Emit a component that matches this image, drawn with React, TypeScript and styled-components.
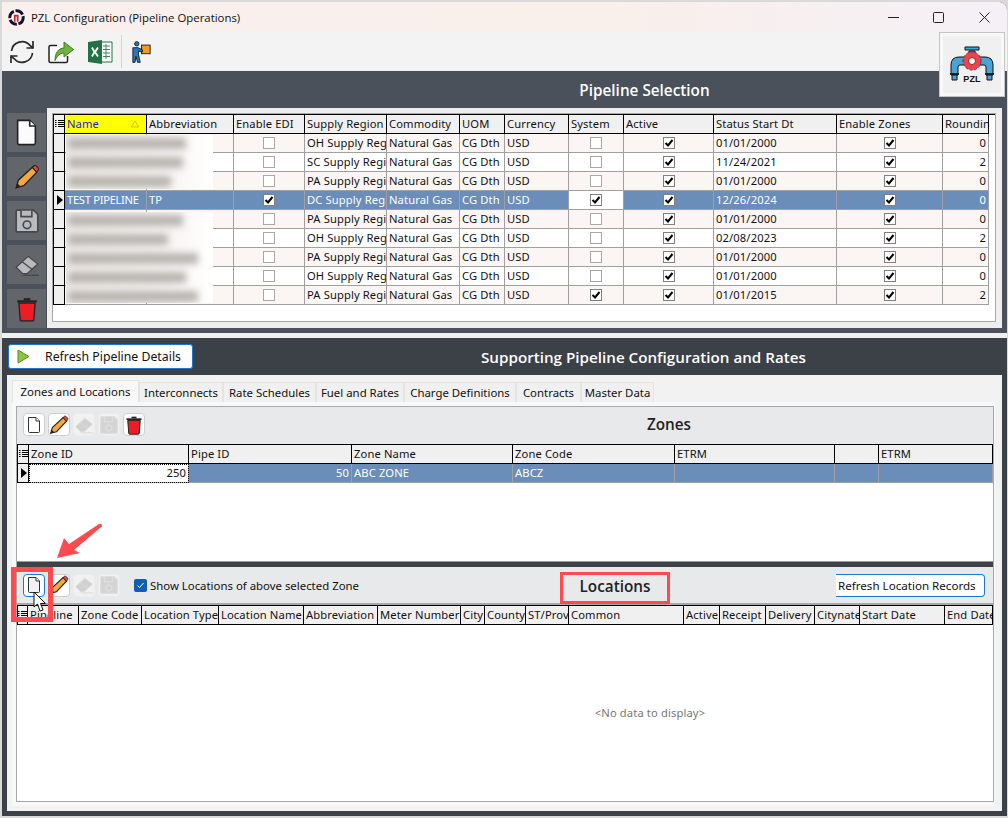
import styled, { createGlobalStyle } from "styled-components";

const GlobalStyle = createGlobalStyle`
  html, body {
    margin: 0;
    padding: 0;
    background: #d9d9d9;
  }
  * {
    box-sizing: border-box;
  }
`;

const gridFont = `"Noto Sans", "DejaVu Sans", sans-serif`;
const titleFont = `"Open Sans", "Noto Sans", sans-serif`;

const Window = styled.div`
  position: relative;
  width: 1005px;
  height: 814px;
  margin: 2px 0 0 2px;
  font-family: ${gridFont};
  font-size: 11.2px;
  letter-spacing: 0.12px;
  color: #111;
  background: #4a515a;
  overflow: hidden;
  border-top-right-radius: 8px;
`;

const TitleBar = styled.div`
  height: 30px;
  display: flex;
  align-items: center;
  padding-left: 6px;
  background: linear-gradient(90deg, #f9f0ee 0%, #f9efeb 60%, #f5f0f6 100%);
  font-family: ${titleFont};
  font-size: 11.4px;
  letter-spacing: 0;
`;

const TitleText = styled.span`
  margin-left: 6px;
  flex: 1;
`;

const WinButton = styled.div`
  width: 45.5px;
  height: 30px;
  display: flex;
  align-items: center;
  justify-content: center;
`;

const ToolBar = styled.div`
  height: 39px;
  display: flex;
  align-items: center;
  padding-left: 7px;
  background: #f3f3f3;
  gap: 13px;
`;

const ToolSep = styled.div`
  width: 1px;
  height: 33px;
  margin: 0 -3px 0 -5px;
  background: #d4d4d4;
`;

const TopSection = styled.div`
  height: 262px;
  display: flex;
  padding-left: 5px;
  background: #4a515a;
`;

const Rail = styled.div`
  width: 39px;
  margin: 42px 1px 0 0;
  display: flex;
  flex-direction: column;
  gap: 5px;
`;

const RailButton = styled.div`
  width: 39px;
  height: 39px;
  display: flex;
  align-items: center;
  justify-content: center;
  background: #62656a;
`;

const TopColumn = styled.div`
  width: 955px;
  display: flex;
  flex-direction: column;
`;

const SectionHeading = styled.div`
  height: 37px;
  padding-left: 240px;
  display: flex;
  align-items: center;
  justify-content: center;
  font-family: ${titleFont};
  font-size: 15.3px;
  font-weight: 600;
  letter-spacing: 0;
  color: #fff;
`;

const TopPanel = styled.div`
  height: 220px;
  padding: 5px 6px 6px 5px;
  background: #eeeeee;
`;

const WhiteBox = styled.div`
  height: 100%;
  border: 1px solid #a8a8a8;
  background: #fff;
`;

const Divider = styled.div`
  height: 5px;
  background: #f0f0f0;
`;

const LowerSection = styled.div`
  height: 478px;
  padding: 0 5px;
  background: #3c4047;
`;

const LowerHeader = styled.div`
  height: 37px;
  display: flex;
  align-items: center;
`;

const RefreshDetails = styled.div`
  width: 185px;
  height: 25px;
  margin-left: 1px;
  display: flex;
  align-items: center;
  background: #fff;
  border: 1px solid #1a78d0;
  border-radius: 3px;
  font-size: 12.3px;
  letter-spacing: 0;
  padding-left: 8px;
  gap: 15px;
`;

const LowerHeading = styled.div`
  margin-left: 288px;
  font-family: ${titleFont};
  font-size: 15.2px;
  font-weight: 600;
  letter-spacing: 0;
  color: #fff;
`;

const LowerPanel = styled.div`
  width: 995px;
  height: 436px;
  padding: 5px 0 0 5px;
  background: #f2f2f2;
`;

const TabRow = styled.div`
  height: 22px;
  display: flex;
  align-items: flex-end;
`;

const Tab = styled.div<{ $w: number; $active?: boolean }>`
  width: ${(p) => p.$w}px;
  height: ${(p) => (p.$active ? 22 : 20)}px;
  display: flex;
  align-items: center;
  justify-content: center;
  white-space: nowrap;
  font-size: 11.4px;
  letter-spacing: 0;
  background: ${(p) => (p.$active ? "#f8f8f8" : "#f0f0f0")};
  border: 1px solid #e4e4e4;
  border-bottom: none;
`;

const TabPage = styled.div`
  width: 983px;
  height: 404px;
  padding: 4px 1px 0 4px;
  background: #f8f8f8;
`;

const Frame = styled.div`
  width: 978px;
  height: 396px;
  display: flex;
  flex-direction: column;
  border: 1px solid #a8a8a8;
  background: #fff;
`;

const PaneBar = styled.div<{ $h: number; $under?: number }>`
  height: ${(p) => p.$h}px;
  flex: none;
  display: flex;
  align-items: center;
  padding: 0 0 ${(p) => p.$under ?? 0}px 6px;
  gap: 3px;
  background: #e8e9eb;
`;

const SmallButton = styled.div<{ $off?: boolean; $focus?: boolean }>`
  width: 22px;
  height: 23px;
  display: flex;
  align-items: center;
  justify-content: center;
  background: ${(p) => (p.$off ? "#f1f1f1" : "#fff")};
  border: 1px solid ${(p) => (p.$focus ? "#1a78d0" : p.$off ? "#ececec" : "#cfcfcf")};
  border-radius: 4px;
`;

const PaneTitle = styled.div<{ $left: number; $w: number; $drop: number }>`
  width: ${(p) => p.$w}px;
  margin: ${(p) => Math.max(p.$drop, 0)}px 0 ${(p) => Math.max(-p.$drop, 0)}px ${(p) => p.$left}px;
  text-align: center;
  font-family: ${titleFont};
  font-size: 15.3px;
  font-weight: 600;
  letter-spacing: 0;
  color: #222;
`;

const ShowLabel = styled.label`
  display: flex;
  align-items: center;
  gap: 3px;
  margin-left: 11px;
  width: 225px;
  white-space: nowrap;
  font-size: 11.4px;
  letter-spacing: 0;
`;

const BlueCheck = styled.span`
  width: 13px;
  height: 13px;
  display: flex;
  align-items: center;
  justify-content: center;
  border-radius: 2px;
  background: #0f5fb5;
`;

const RefreshRecords = styled.div`
  width: 149px;
  height: 23px;
  margin-left: 163px;
  display: flex;
  align-items: center;
  padding-left: 2px;
  white-space: nowrap;
  font-size: 11.6px;
  letter-spacing: 0;
  background: #fff;
  border: 1px solid #1a78d0;
  border-left: none;
  border-radius: 0 4px 4px 0;
`;

const Splitter = styled.div`
  height: 6px;
  flex: none;
  background: #3f4349;
  border-top: 1px solid #9a9a9a;
`;

const BarRule = styled.div`
  height: 2px;
  flex: none;
  background: #a8a8a8;
`;

const GridPane = styled.div<{ $h: number }>`
  height: ${(p) => p.$h}px;
  flex: none;
  position: relative;
  background: #fff;
`;

const GridRow = styled.div<{ $cols: string }>`
  display: grid;
  grid-template-columns: ${(p) => p.$cols};
  height: 19px;
`;

const HeaderRow = styled(GridRow)`
  height: 20px;
  border-top: 1px solid #000;
`;

const HeadCell = styled.div<{ $hot?: boolean }>`
  display: flex;
  align-items: center;
  justify-content: space-between;
  padding: 0 2px 1px;
  overflow: hidden;
  white-space: nowrap;
  background: ${(p) => (p.$hot ? "#ffff00" : "#f0f0f0")};
  color: ${(p) => (p.$hot ? "#1a1ae0" : "#111")};
  border-right: 1px solid #000;
  border-bottom: 1px solid #000;
`;

const SortMark = styled.svg`
  margin-right: 5px;
`;

const Corner = styled.div`
  display: flex;
  align-items: center;
  justify-content: center;
  background: #f0f0f0;
  border-left: 1px solid #000;
  border-right: 1px solid #000;
  border-bottom: 1px solid #000;
`;

const Marker = styled(Corner)`
  padding-left: 1px;
`;

const Cell = styled.div<{
  $bg: string;
  $light?: boolean;
  $right?: boolean;
  $center?: boolean;
  $dotted?: boolean;
  $tight?: boolean;
}>`
  display: flex;
  align-items: center;
  justify-content: ${(p) => (p.$right ? "flex-end" : p.$center ? "center" : "flex-start")};
  padding: 0 2px 1px;
  overflow: hidden;
  white-space: nowrap;
  background: ${(p) => p.$bg};
  color: ${(p) => (p.$light ? "#fff" : "#111")};
  border-right: 1px solid #a0a0a0;
  border-bottom: 1px solid #a0a0a0;
  ${(p) => (p.$tight ? "letter-spacing: -0.3px;" : "")}
  ${(p) => (p.$dotted ? "outline: 1px dotted #000; outline-offset: -1px;" : "")}
`;

const Box = styled.span<{ $on?: boolean }>`
  width: 12px;
  height: 12px;
  display: flex;
  align-items: center;
  justify-content: center;
  background: #fff;
  border: 1px solid ${(p) => (p.$on ? "#808080" : "#a8a8a8")};
`;

const BlurPatch = styled.div<{ $top: number; $h: number }>`
  position: absolute;
  left: 13px;
  top: ${(p) => p.$top}px;
  width: 147px;
  height: ${(p) => p.$h}px;
  display: flex;
  flex-direction: column;
  padding: 3px 0 0 2px;
  gap: 8px;
  overflow: hidden;
  background: linear-gradient(90deg, #f1edea 0%, #f8f5f3 70%, #fff 100%);
`;

const BlurBar = styled.div<{ $w: number }>`
  width: ${(p) => p.$w}px;
  height: 11px;
  flex: none;
  background: #b8b3af;
  filter: blur(3.5px);
`;

const Empty = styled.div`
  height: 175px;
  display: flex;
  align-items: center;
  justify-content: center;
  padding-left: 290px;
  color: #777;
`;

const LogoCard = styled.div`
  position: absolute;
  left: 937px;
  top: 30px;
  width: 66px;
  height: 65px;
  display: flex;
  align-items: center;
  justify-content: center;
  background: #f0f0f0;
  border: 1px solid #c4c4c4;
  outline: 3px solid #f8f8f8;
  outline-offset: -4px;
`;

const RedBox = styled.div<{ $x: number; $y: number; $w: number; $h: number; $t: number }>`
  position: absolute;
  left: ${(p) => p.$x}px;
  top: ${(p) => p.$y}px;
  width: ${(p) => p.$w}px;
  height: ${(p) => p.$h}px;
  border: ${(p) => p.$t}px solid #ff4b4f;
`;

const Overlay = styled.svg`
  position: absolute;
  overflow: visible;
`;

const ArrowMark = styled(Overlay)`
  left: 53px;
  top: 519px;
`;

const CursorMark = styled(Overlay)`
  left: 30px;
  top: 589px;
`;

const RefreshIcon = () => (
  <svg width="26" height="26" viewBox="0 0 26 26" fill="none" stroke="#2a2a2a" strokeWidth="1.7">
    <path d="M2.5 12 A10.5 10.5 0 0 1 21 6.5 L24 9" />
    <path d="M24 2 V9 H17.5" />
    <path d="M23.5 14 A10.5 10.5 0 0 1 5 19.5 L2 17" />
    <path d="M2 24 V17 H8.5" />
  </svg>
);

const ShareIcon = () => (
  <svg width="26" height="26" viewBox="0 0 26 26">
    <path d="M9 6.500 H2.500 Q1 6.500 1 8 V22 Q1 23.500 2.500 23.500 H18 Q19.500 23.500 19.500 22 V17" fill="#fff" stroke="#222" strokeWidth="1.500" />
    <path d="M7 21.500 C7 14 10 9.500 16 9 V3 L25.500 10.500 L16 18 V14 C12 14 9 17 7 21.500 Z" fill="#6fb33c" stroke="#3e7e1e" />
  </svg>
);

const ExcelIcon = () => (
  <svg width="26" height="26" viewBox="0 0 26 26">
    <path d="M10 3 H25 V23 H10 Z" fill="#fff" stroke="#217346" />
    <path d="M16 7 H23 M16 10.500 H23 M16 14 H23 M16 17.500 H23 M19 5 V20" stroke="#3a8a5c" strokeWidth="1" />
    <path d="M1 3 L15 1 V25 L1 23 Z" fill="#217346" />
    <path d="M5 8.500 L7.500 13 L5 17.500 M11 8.500 L8 13 L11 17.500" stroke="#fff" strokeWidth="1.800" fill="none" />
  </svg>
);

const CarrierIcon = () => (
  <svg width="19" height="24" viewBox="0 0 22 26">
    <rect x="11" y="5" width="10" height="10" fill="#f39a1f" stroke="#111" />
    <circle cx="5.500" cy="3.500" r="2.500" fill="#2479bd" stroke="#111" />
    <path d="M2 8 H7 L12 10.500 V13 L7.500 12 V16 L9.500 25 H6.500 L4.500 18 L3.500 25 H1 V8 Z" fill="#2479bd" stroke="#111" />
  </svg>
);

const DocIcon = ({ size = 18, fill = "#fff", line = "#333" }: { size?: number; fill?: string; line?: string }) => (
  <svg width={size} height={size} viewBox="0 0 18 18" fill={fill} stroke={line} strokeWidth="1">
    <path d="M3.500 1.500 H11 L14.500 5 V15.500 Q14.500 16.500 13.500 16.500 H4.500 Q3.500 16.500 3.500 15.500 Z" />
    <path d="M11 1.500 V5 H14.500" />
  </svg>
);

const PencilIcon = ({ size = 20 }: { size?: number }) => (
  <svg width={size} height={size} viewBox="0 0 24 24">
    <path d="M2 22 L4 15 L17 3 L21 7.500 L9 20 Z" fill="#f6a93b" stroke="#222" strokeWidth="1.300" />
    <path d="M17 3 L18.500 1.600 Q19.500 1 20.500 1.800 L22.300 3.700 Q23 4.800 22.200 5.800 L21 7.500 Z" fill="#ef4452" stroke="#222" strokeWidth="1" />
    <path d="M2 22 L3.200 17.800 L6.200 20.800 Z" fill="#222" />
  </svg>
);

const SaveIcon = ({ size = 20, fill = "#d4d4d4", line = "#dedede" }: { size?: number; fill?: string; line?: string }) => (
  <svg width={size} height={size} viewBox="0 0 24 24" fill={fill} stroke={line} strokeWidth="1.500">
    <path d="M2 3 Q2 2 3 2 H18 L22 6 V21 Q22 22 21 22 H3 Q2 22 2 21 Z" />
    <path d="M6.500 2.500 V8 H16.500 V2.500" />
    <circle cx="12" cy="15.500" r="3.500" />
  </svg>
);

const EraserIcon = ({ size = 20, fill = "#d0d0d0", line = "#dadada" }: { size?: number; fill?: string; line?: string }) => (
  <svg width={size} height={size} viewBox="0 0 24 24" fill={fill} stroke={line} strokeWidth="1.200">
    <path d="M2 14 L13 4 L22 11 L12 20 H8 Z" />
    <path d="M7.500 9 L16.500 16" fill="none" />
    <path d="M8 21.500 H23" fill="none" />
  </svg>
);

const TrashIcon = ({ size = 20 }: { size?: number }) => (
  <svg width={size} height={size} viewBox="0 0 24 24">
    <path d="M9 2 H15 V4 H9 Z" fill="#222" />
    <path d="M3 4 H21 V6 H3 Z" fill="#222" />
    <path d="M4.500 6.500 H19.500 L18.300 22 Q18.200 23 17.300 23 H6.700 Q5.800 23 5.700 22 Z" fill="#ee1c25" stroke="#222" strokeWidth="1.200" />
  </svg>
);

const ListGlyph = () => (
  <svg width="9" height="10" viewBox="0 0 9 10" stroke="#000" strokeWidth="1">
    <path d="M0 1.500 H1.500 M3 1.500 H9 M0 3.500 H1.500 M3 3.500 H9 M0 5.500 H1.500 M3 5.500 H9 M0 7.500 H1.500 M3 7.500 H9" />
  </svg>
);

const RowArrow = () => (
  <svg width="6" height="10" viewBox="0 0 6 10">
    <path d="M0 0 L6 5 L0 10 Z" fill="#000" />
  </svg>
);

const CheckMark = () => (
  <svg width="10" height="10" viewBox="0 0 10 10" fill="none" stroke="#000" strokeWidth="2">
    <path d="M1.500 5 L4 7.500 L8.500 2" />
  </svg>
);

const PipeLogo = () => (
  <svg width="46" height="40" viewBox="0 0 46 40">
    <path d="M20 6 H26 V12 H20 Z M16 2 H30 V5 H16 Z" fill="#4aa3d8" stroke="#111" />
    <path d="M2 30 V20 Q2 12 10 12 H16 V20 H11 Q9 20 9 22 V30 Z" fill="#4aa3d8" stroke="#111" />
    <path d="M44 30 V20 Q44 12 36 12 H30 V20 H35 Q37 20 37 22 V30 Z" fill="#4aa3d8" stroke="#111" />
    <path d="M1 28 H10 V30 H1 Z M36 28 H45 V30 H36 Z" fill="#222" />
    <path d="M3 30 H8 V35 H3 Z M38 30 H43 V35 H38 Z" fill="#4aa3d8" stroke="#111" />
    <circle cx="23" cy="16" r="9" fill="#e8454f" stroke="#a01e28" strokeDasharray="3 1.500" />
    <circle cx="23" cy="16" r="3.500" fill="#fff" stroke="#a01e28" />
    <text x="23" y="36.500" textAnchor="middle" fontFamily="Liberation Sans, sans-serif" fontSize="9" fontWeight="700" fill="#111">
      PZL
    </text>
  </svg>
);

const AppLogo = () => (
  <svg width="17" height="17" viewBox="0 0 16 16">
    <circle cx="8" cy="8" r="6.300" fill="#fff" stroke="#141428" strokeWidth="2.800" strokeDasharray="8 1.500" />
    <path d="M5.500 12 V5.500 H10 V12 H8.300 V7 H7.200 V12 Z" fill="#d8212c" />
  </svg>
);

const topCols = "12px 82px 87px 71px 82px 73px 45px 64px 55px 90px 123px 106px 46px";
const zoneCols = "12px 160px 163px 161px 162px 160px 44px 114px";
const locCols = "11px 51px 63px 77px 85px 74px 83px 24px 41px 43px 115px 36px 46px 49px 45px 85px 48px";

const topHeads = [
  "Abbreviation",
  "Enable EDI",
  "Supply Region",
  "Commodity",
  "UOM",
  "Currency",
  "System",
  "Active",
  "Status Start Dt",
  "Enable Zones",
  "Rounding",
];

const pipelines = [
  { region: "OH Supply Region", date: "01/01/2000", round: 0 },
  { region: "SC Supply Region", date: "11/24/2021", round: 2 },
  { region: "PA Supply Region", date: "01/01/2000", round: 0 },
  { region: "DC Supply Region", date: "12/26/2024", round: 0, name: "TEST PIPELINE", abbr: "TP", edi: true, system: true },
  { region: "PA Supply Region", date: "01/01/2000", round: 0 },
  { region: "OH Supply Region", date: "02/08/2023", round: 2 },
  { region: "PA Supply Region", date: "01/01/2000", round: 0 },
  { region: "OH Supply Region", date: "01/01/2000", round: 0 },
  { region: "PA Supply Region", date: "01/01/2015", round: 2, system: true },
];

const locHeads = [
  "Pipeline",
  "Zone Code",
  "Location Type",
  "Location Name",
  "Abbreviation",
  "Meter Number",
  "City",
  "County",
  "ST/Prov",
  "Common",
  "Active",
  "Receipt",
  "Delivery",
  "Citynate",
  "Start Date",
  "End Date",
];

const tabs = [
  { label: "Interconnects", w: 84 },
  { label: "Rate Schedules", w: 93 },
  { label: "Fuel and Rates", w: 88 },
  { label: "Charge Definitions", w: 112 },
  { label: "Contracts", w: 65 },
  { label: "Master Data", w: 73 },
];

const BLUE = "#6a8db9";

function CheckCell({ on, bg }: { on?: boolean; bg: string }) {
  return (
    <Cell $bg={bg} $center>
      <Box $on={on}>{on && <CheckMark />}</Box>
    </Cell>
  );
}

function PipelineRow({ row, index }: { row: (typeof pipelines)[number]; index: number }) {
  const selected = row.name !== undefined;
  const bg = selected ? BLUE : index % 2 === 0 ? "#fbf6f3" : "#fff";
  return (
    <GridRow $cols={topCols}>
      <Marker>{selected && <RowArrow />}</Marker>
      <Cell $bg={bg} $light={selected} $tight>{row.name}</Cell>
      <Cell $bg={bg} $light={selected}>{row.abbr}</Cell>
      <CheckCell bg={bg} on={row.edi} />
      <Cell $bg={bg} $light={selected}>{row.region}</Cell>
      <Cell $bg={bg} $light={selected}>Natural Gas</Cell>
      <Cell $bg={bg} $light={selected}>CG Dth</Cell>
      <Cell $bg={bg} $light={selected}>USD</Cell>
      <CheckCell bg={selected ? "#fff" : bg} on={row.system} />
      <CheckCell bg={bg} on />
      <Cell $bg={bg} $light={selected}>{row.date}</Cell>
      <CheckCell bg={bg} on />
      <Cell $bg={bg} $light={selected} $right>{row.round}</Cell>
    </GridRow>
  );
}

export default function App() {
  return (
    <>
      <GlobalStyle />
      <Window>
        <TitleBar>
          <AppLogo />
          <TitleText>PZL Configuration (Pipeline Operations)</TitleText>
          <WinButton>
            <svg width="11" height="11" viewBox="0 0 11 11" stroke="#222" fill="none">
              <path d="M0 5.500 H11" />
            </svg>
          </WinButton>
          <WinButton>
            <svg width="11" height="11" viewBox="0 0 11 11" stroke="#222" fill="none">
              <rect x="0.500" y="0.500" width="10" height="10" rx="1" />
            </svg>
          </WinButton>
          <WinButton>
            <svg width="11" height="11" viewBox="0 0 11 11" stroke="#222" fill="none">
              <path d="M0.500 0.500 L10.500 10.500 M10.500 0.500 L0.500 10.500" />
            </svg>
          </WinButton>
        </TitleBar>

        <ToolBar>
          <RefreshIcon />
          <ShareIcon />
          <ExcelIcon />
          <ToolSep />
          <CarrierIcon />
        </ToolBar>

        <TopSection>
          <Rail>
            <RailButton>
              <DocIcon size={29} fill="#fbfbfb" line="#222" />
            </RailButton>
            <RailButton>
              <PencilIcon size={26} />
            </RailButton>
            <RailButton>
              <SaveIcon size={26} fill="#b9babc" line="#45474b" />
            </RailButton>
            <RailButton>
              <EraserIcon size={26} fill="#b9babc" line="#45474b" />
            </RailButton>
            <RailButton>
              <TrashIcon size={26} />
            </RailButton>
          </Rail>
          <TopColumn>
            <SectionHeading>Pipeline Selection</SectionHeading>
            <TopPanel>
              <WhiteBox>
                <GridPane $h={190}>
                  <HeaderRow $cols={topCols}>
                    <Corner>
                      <ListGlyph />
                    </Corner>
                    <HeadCell $hot>
                      Name
                      <SortMark width="8" height="8" viewBox="0 0 8 8" fill="none" stroke="#c9c34a">
                        <path d="M4 1 L7.500 7 H0.500 Z" />
                      </SortMark>
                    </HeadCell>
                    {topHeads.map((h) => (
                      <HeadCell key={h}>{h}</HeadCell>
                    ))}
                  </HeaderRow>
                  {pipelines.map((row, i) => (
                    <PipelineRow key={i} row={row} index={i} />
                  ))}
                  <BlurPatch $top={21} $h={54}>
                    {[118, 115, 103].map((w, i) => (
                      <BlurBar key={i} $w={w} />
                    ))}
                  </BlurPatch>
                  <BlurPatch $top={98} $h={91}>
                    {[115, 100, 130, 118, 130].map((w, i) => (
                      <BlurBar key={i} $w={w} />
                    ))}
                  </BlurPatch>
                </GridPane>
              </WhiteBox>
            </TopPanel>
          </TopColumn>
        </TopSection>

        <Divider />

        <LowerSection>
          <LowerHeader>
            <RefreshDetails>
              <svg width="13" height="15" viewBox="0 0 13 15">
                <path d="M1 1 L12 7.500 L1 14 Z" fill="#8cc63f" stroke="#5a8a2a" />
              </svg>
              Refresh Pipeline Details
            </RefreshDetails>
            <LowerHeading>Supporting Pipeline Configuration and Rates</LowerHeading>
          </LowerHeader>
          <LowerPanel>
            <TabRow>
              <Tab $w={127} $active>Zones and Locations</Tab>
              {tabs.map((t) => (
                <Tab key={t.label} $w={t.w}>{t.label}</Tab>
              ))}
            </TabRow>
            <TabPage>
              <Frame>
                <PaneBar $h={37} $under={2}>
                  <SmallButton>
                    <DocIcon />
                  </SmallButton>
                  <SmallButton>
                    <PencilIcon />
                  </SmallButton>
                  <SmallButton $off>
                    <EraserIcon />
                  </SmallButton>
                  <SmallButton $off>
                    <SaveIcon />
                  </SmallButton>
                  <SmallButton>
                    <TrashIcon />
                  </SmallButton>
                  <PaneTitle $left={426} $w={190} $drop={-2}>Zones</PaneTitle>
                </PaneBar>
                <GridPane $h={117}>
                  <HeaderRow $cols={zoneCols}>
                    <Corner>
                      <ListGlyph />
                    </Corner>
                    <HeadCell>Zone ID</HeadCell>
                    <HeadCell>Pipe ID</HeadCell>
                    <HeadCell>Zone Name</HeadCell>
                    <HeadCell>Zone Code</HeadCell>
                    <HeadCell>ETRM</HeadCell>
                    <HeadCell />
                    <HeadCell>ETRM</HeadCell>
                  </HeaderRow>
                  <GridRow $cols={zoneCols}>
                    <Marker>
                      <RowArrow />
                    </Marker>
                    <Cell $bg="#fff" $right $dotted>250</Cell>
                    <Cell $bg={BLUE} $light $right>50</Cell>
                    <Cell $bg={BLUE} $light>ABC ZONE</Cell>
                    <Cell $bg={BLUE} $light>ABCZ</Cell>
                    <Cell $bg={BLUE} />
                    <Cell $bg={BLUE} />
                    <Cell $bg={BLUE} />
                  </GridRow>
                </GridPane>
                <Splitter />
                <PaneBar $h={36}>
                  <SmallButton $focus>
                    <DocIcon fill="#f2f2f2" />
                  </SmallButton>
                  <SmallButton>
                    <PencilIcon />
                  </SmallButton>
                  <SmallButton $off>
                    <EraserIcon />
                  </SmallButton>
                  <SmallButton $off>
                    <SaveIcon />
                  </SmallButton>
                  <ShowLabel>
                    <BlueCheck>
                      <svg width="9" height="9" viewBox="0 0 9 9" fill="none" stroke="#fff" strokeWidth="1">
                        <path d="M1.500 4.500 L3.500 6.500 L7.500 2" />
                      </svg>
                    </BlueCheck>
                    Show Locations of above selected Zone
                  </ShowLabel>
                  <PaneTitle $left={198} $w={110} $drop={2}>Locations</PaneTitle>
                  <RefreshRecords>Refresh Location Records</RefreshRecords>
                </PaneBar>
                <BarRule />
                <GridPane $h={196}>
                  <HeaderRow $cols={locCols}>
                    <Corner>
                      <ListGlyph />
                    </Corner>
                    {locHeads.map((h) => (
                      <HeadCell key={h}>{h}</HeadCell>
                    ))}
                  </HeaderRow>
                  <Empty>&lt;No data to display&gt;</Empty>
                </GridPane>
              </Frame>
            </TabPage>
          </LowerPanel>
        </LowerSection>

        <RedBox $x={9} $y={565} $w={42} $h={55} $t={5} />
        <RedBox $x={558} $y={570} $w={110} $h={32} $t={3} />

        <ArrowMark width="50" height="42" viewBox="0 0 50 42">
          <path d="M2 37 L9 17 L14 23 L44 3 Q47 2 47 5 Q47 6 45 7 L19 29 L25 32 Z" fill="#ff4b4f" />
        </ArrowMark>
        <CursorMark width="17" height="23" viewBox="0 0 17 23">
          <path d="M2 1 L2 16 L5.500 13 L8 20 L11 19 L8.500 12.500 L13.500 12.500 Z" fill="#fff" stroke="#111" strokeWidth="1" />
        </CursorMark>

        <LogoCard>
          <PipeLogo />
        </LogoCard>
      </Window>
    </>
  );
}
